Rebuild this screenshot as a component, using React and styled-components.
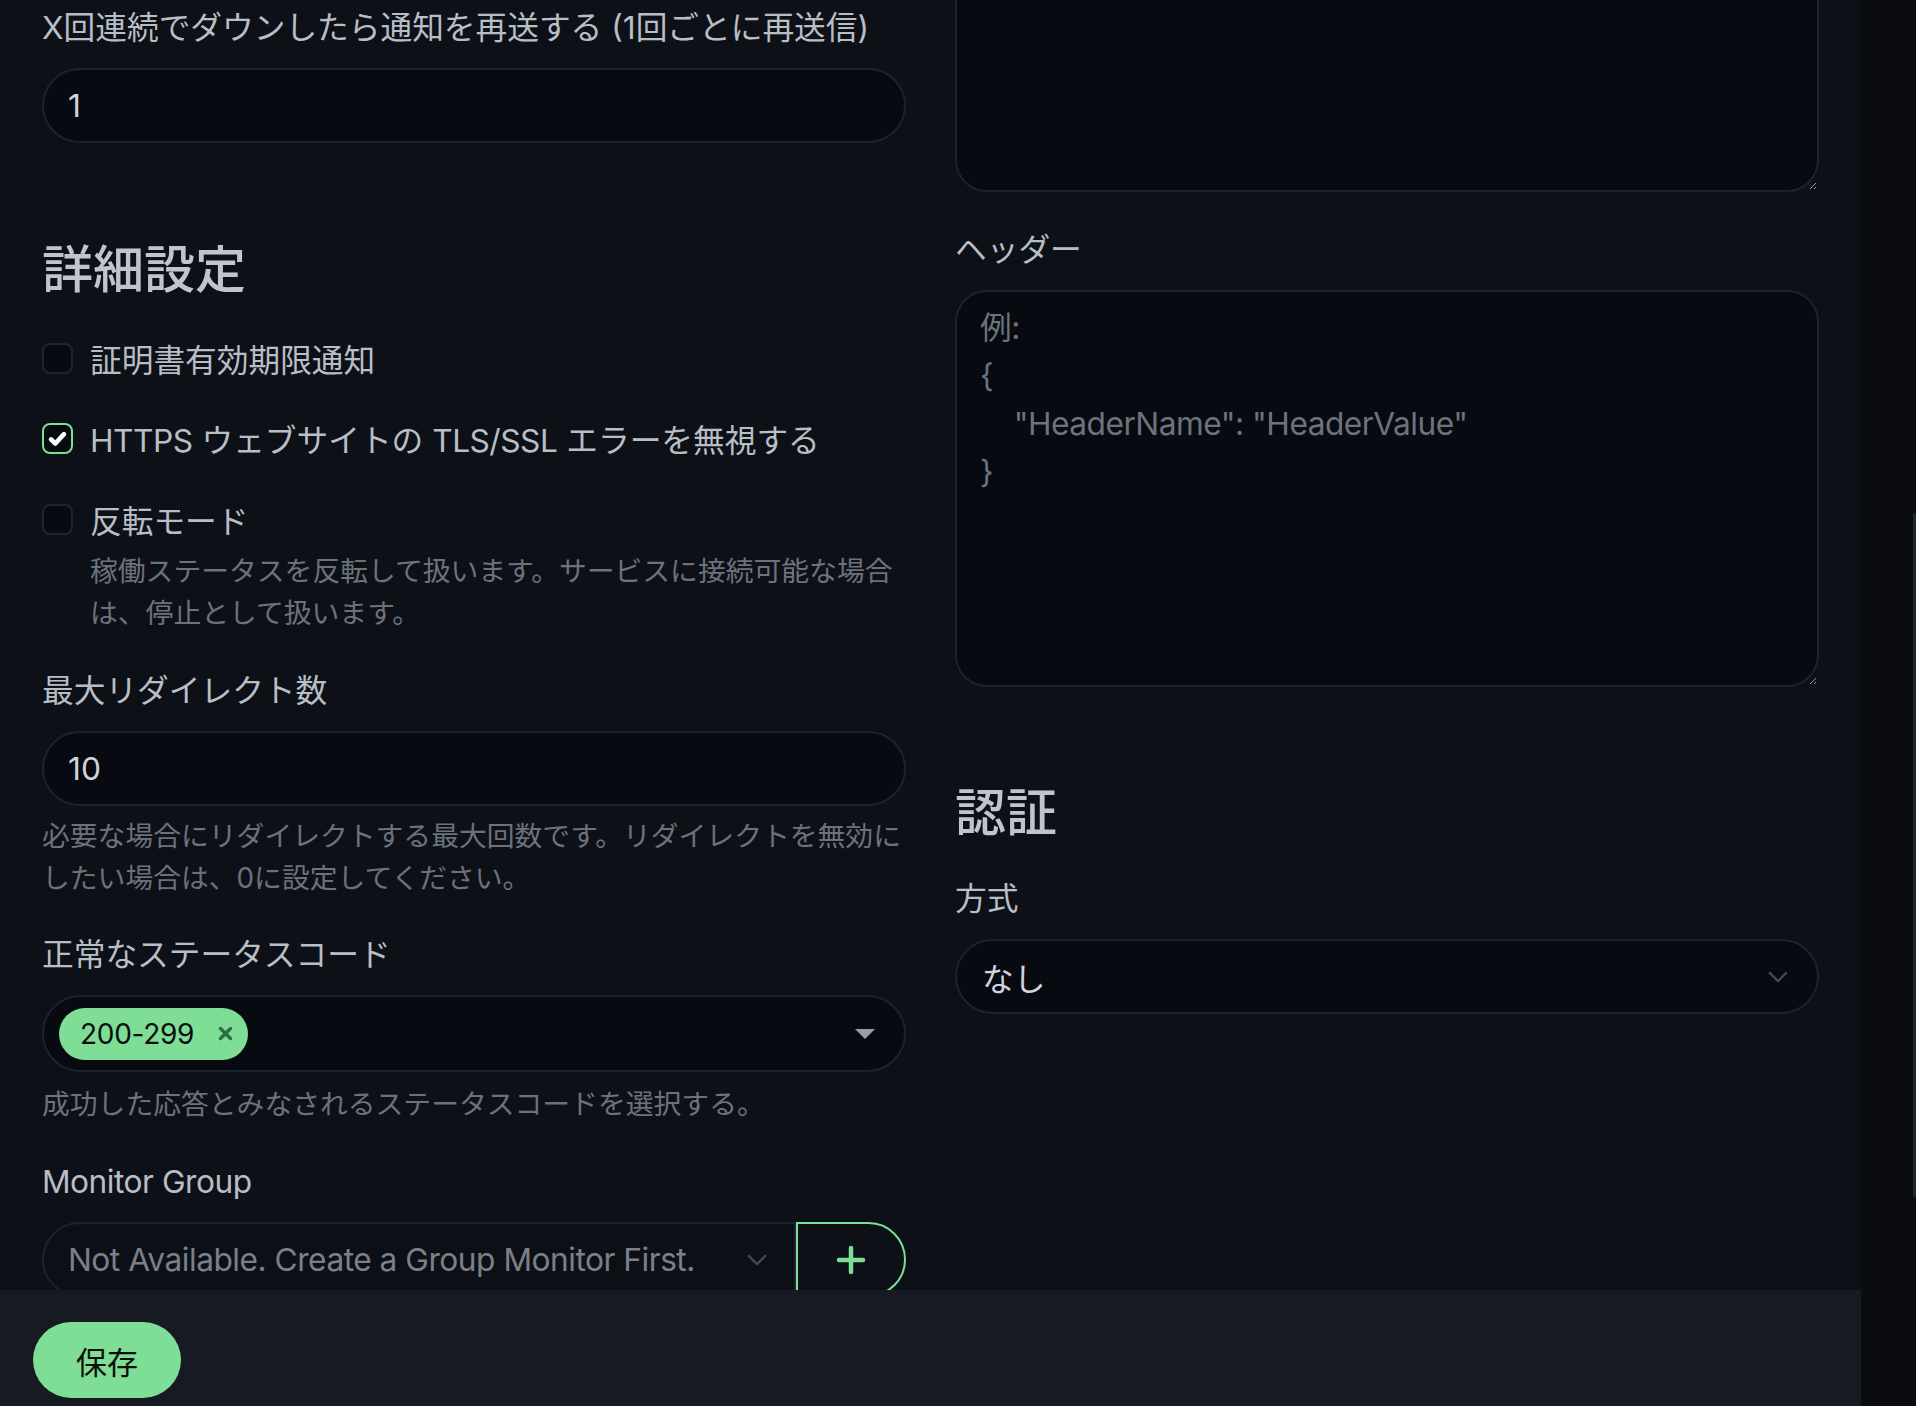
import React from "react";
import styled, { createGlobalStyle } from "styled-components";

const GlobalStyle = createGlobalStyle`
  html, body {
    margin: 0;
    padding: 0;
    height: 100%;
    overflow: hidden;
    background: #0d1117;
  }
  body {
    font-family: Inter, "Noto Sans CJK JP", sans-serif;
    color: #b8bec6;
    color-scheme: dark;
  }
  * {
    box-sizing: border-box;
  }
`;

const GREEN = "#7fde95";

const Page = styled.div`
  display: flex;
  height: 100vh;
  overflow: hidden;
`;

const Main = styled.main`
  flex: 1;
  display: grid;
  grid-template-columns: 864px 864px;
  column-gap: 49px;
  align-items: start;
  padding: 4px 42px 0;
  background: #0d1117;
`;

const Column = styled.div`
  display: flex;
  flex-direction: column;
`;

const ScrollTrack = styled.div`
  width: 55px;
  display: flex;
  justify-content: flex-end;
  background: #0a0c10;
`;

const ScrollThumb = styled.div`
  width: 3px;
  height: 684px;
  margin-top: 513px;
  border-radius: 2px;
  background: #1f2531;
`;

// Latin runs are set a touch tighter, closer to the system UI face
const Latin = styled.span`
  letter-spacing: -0.5px;
`;

const Label = styled.label`
  display: block;
  margin: ${(p) => p.$mt || 0}px 0 16px;
  font-size: 31.7px;
  line-height: 48px;
  color: #b8bec6;
`;

const Title = styled.h2`
  margin: ${(p) => p.$mt || 0}px 0 0;
  font-size: 51px;
  line-height: 61px;
  font-weight: 500;
  color: #c0c4cb;
`;

const TextInput = styled.input`
  display: block;
  width: 100%;
  height: 75px;
  padding: 0 24px;
  border: 2px solid #1b2230;
  border-radius: 38px;
  background: #070a10;
  color: #d0d4da;
  font-family: inherit;
  font-size: 31.7px;
  outline: none;
`;

const TextArea = styled.textarea`
  display: block;
  width: 100%;
  height: ${(p) => p.$h}px;
  margin-top: ${(p) => p.$mt || 0}px;
  padding: 12px 23px;
  border: 2px solid #1b2230;
  border-radius: 32px;
  background: #070a10;
  color: #d0d4da;
  font-family: inherit;
  font-size: 31.7px;
  line-height: 48px;
  letter-spacing: -0.5px;
  outline: none;
  resize: vertical;

  &::placeholder {
    color: #6c737d;
  }
`;

const Hint = styled.div`
  margin: ${(p) => p.$mt || 0}px 0 0 ${(p) => (p.$indent ? 48 : 0)}px;
  font-size: 27.8px;
  line-height: 42px;
  color: #6b727c;
`;

const CheckRow = styled.label`
  display: flex;
  align-items: center;
  gap: 17px;
  height: 48px;
  margin-top: ${(p) => p.$mt || 0}px;
  font-size: 31.7px;
  color: #b8bec6;
`;

const CheckBox = styled.span`
  display: flex;
  align-items: center;
  justify-content: center;
  flex: none;
  width: 31px;
  height: 31px;
  border: 2px solid ${(p) => (p.$checked ? GREEN : "#1d2532")};
  border-radius: 8px;
  background: #070a10;
`;

const SelectBox = styled.div`
  display: flex;
  align-items: center;
  justify-content: space-between;
  height: ${(p) => p.$h || 75}px;
  padding: 0 ${(p) => p.$pr || 28}px 0 ${(p) => p.$pl || 25}px;
  border: 2px solid #1b2230;
  border-radius: ${(p) => (p.$joined ? "38px 0 0 38px" : "39px")};
  background: ${(p) => (p.$muted ? "#0c0f15" : "#070a10")};
  color: ${(p) => (p.$muted ? "#7a808a" : "#d0d4da")};
  font-size: 31.7px;
  flex: ${(p) => (p.$joined ? 1 : "none")};
`;

const Tag = styled.span`
  display: flex;
  align-items: center;
  height: 52px;
  padding: 0 15px 0 21px;
  border-radius: 26px;
  background: ${GREEN};
  color: #0b0d10;
  font-size: 28px;
  letter-spacing: -0.3px;
`;

const TagClose = styled.span`
  display: flex;
  margin-left: 24px;
`;

const Caret = styled.span`
  width: 0;
  height: 0;
  border-left: 10px solid transparent;
  border-right: 10px solid transparent;
  border-top: 10px solid #9a9da2;
`;

const GroupRow = styled.div`
  display: flex;
`;

const AddButton = styled.button`
  display: flex;
  align-items: center;
  justify-content: center;
  width: 110px;
  height: 75px;
  padding: 0;
  border: 2px solid ${GREEN};
  border-radius: 0 38px 38px 0;
  background: transparent;
`;

const BottomBar = styled.div`
  position: fixed;
  left: 0;
  bottom: 0;
  width: calc(100% - 55px);
  height: 116px;
  padding: 32px 33px;
  background: #161a23;
`;

const SaveButton = styled.button`
  width: 148px;
  height: 76px;
  border: none;
  border-radius: 38px;
  background: ${GREEN};
  color: #0c0f0d;
  font-family: inherit;
  font-size: 31px;
`;

function CheckIcon() {
  return (
    <svg width="27" height="27" viewBox="0 0 20 20" fill="none">
      <path d="m5.2 10.6 3.2 3.1 6.4-6.9" stroke="#fff" strokeWidth="3.4" strokeLinecap="round" strokeLinejoin="round" />
    </svg>
  );
}

function Chevron({ color }) {
  return (
    <svg width="22" height="22" viewBox="0 0 16 16" fill="none">
      <path d="m2 5 6 6 6-6" stroke={color} strokeWidth="1.6" strokeLinecap="round" strokeLinejoin="round" />
    </svg>
  );
}

function CloseIcon() {
  return (
    <svg width="15" height="15" viewBox="0 0 12 12" fill="none">
      <path d="M2 2l8 8M10 2l-8 8" stroke="#2f6b45" strokeWidth="2.8" strokeLinecap="round" />
    </svg>
  );
}

function PlusIcon() {
  return (
    <svg width="30" height="30" viewBox="0 0 30 30" fill="none">
      <path d="M15 3v24M3 15h24" stroke={GREEN} strokeWidth="4.5" strokeLinecap="round" />
    </svg>
  );
}

function Check({ checked, children, mt }) {
  return (
    <CheckRow $mt={mt}>
      <CheckBox $checked={checked}>{checked && <CheckIcon />}</CheckBox>
      <span>{children}</span>
    </CheckRow>
  );
}

const headerPlaceholder = '例:\n{\n    "HeaderName": "HeaderValue"\n}';

export default function App() {
  return (
    <>
      <GlobalStyle />
      <Page>
        <Main>
          <Column>
            <Label>X回連続でダウンしたら通知を再送する (1回ごとに再送信)</Label>
            <TextInput type="number" defaultValue="1" />

            <Title $mt={96}>詳細設定</Title>
            <Check mt={34}>証明書有効期限通知</Check>
            <Check mt={32} checked>
              <Latin>HTTPS</Latin> ウェブサイトの <Latin>TLS/SSL</Latin> エラーを無視する
            </Check>
            <Check mt={33}>反転モード</Check>
            <Hint $mt={7} $indent>
              稼働ステータスを反転して扱います。サービスに接続可能な場合は、停止として扱います。
            </Hint>

            <Label $mt={33}>最大リダイレクト数</Label>
            <TextInput type="number" defaultValue="10" />
            <Hint $mt={9}>
              必要な場合にリダイレクトする最大回数です。リダイレクトを無効にしたい場合は、0に設定してください。
            </Hint>

            <Label $mt={32}>正常なステータスコード</Label>
            <SelectBox $h={77} $pl={15} $pr={29}>
              <Tag>
                200-299
                <TagClose>
                  <CloseIcon />
                </TagClose>
              </Tag>
              <Caret />
            </SelectBox>
            <Hint $mt={11}>成功した応答とみなされるステータスコードを選択する。</Hint>

            <Label $mt={33}>
              <Latin>Monitor Group</Latin>
            </Label>
            <GroupRow>
              <SelectBox $joined $muted $pl={24} $pr={26}>
                <Latin>Not Available. Create a Group Monitor First.</Latin>
                <Chevron color="#454a52" />
              </SelectBox>
              <AddButton type="button">
                <PlusIcon />
              </AddButton>
            </GroupRow>
          </Column>

          <Column>
            <TextArea $mt={-112} $h={300} />

            <Label $mt={34}>ヘッダー</Label>
            <TextArea $h={397} placeholder={headerPlaceholder} />

            <Title $mt={95}>認証</Title>
            <Label $mt={32}>方式</Label>
            <SelectBox $pl={25} $pr={28}>
              なし
              <Chevron color="#454a52" />
            </SelectBox>
          </Column>
        </Main>
        <ScrollTrack>
          <ScrollThumb />
        </ScrollTrack>
      </Page>
      <BottomBar>
        <SaveButton type="button">保存</SaveButton>
      </BottomBar>
    </>
  );
}
